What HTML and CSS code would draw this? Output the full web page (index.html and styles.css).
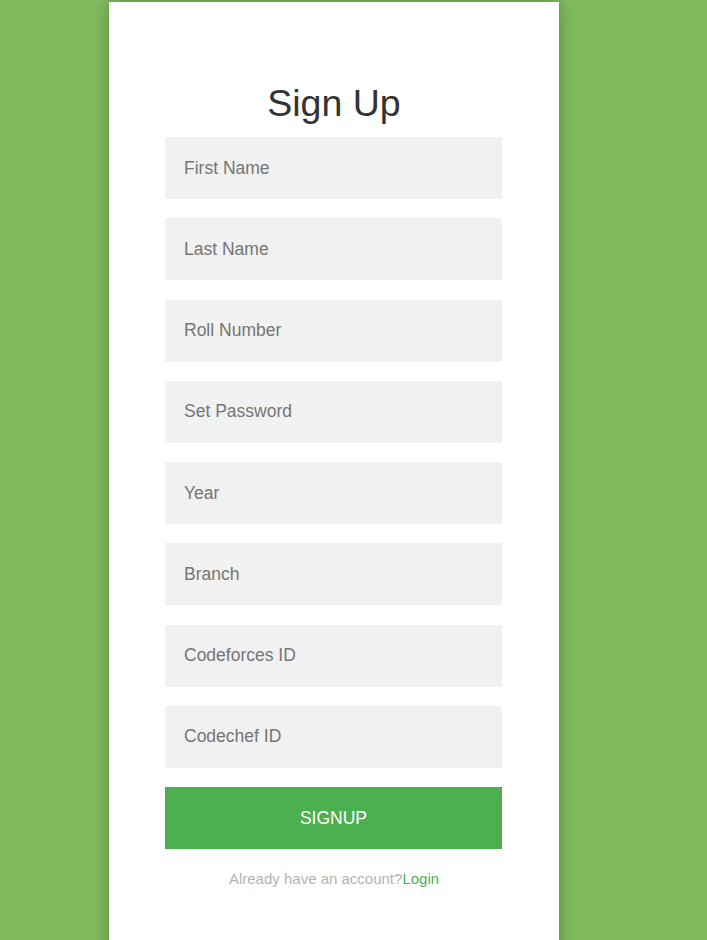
FILE: index.html
```html
<!DOCTYPE html>
<html>
<head>
<meta charset="utf-8">
<link rel="stylesheet" href="styles.css">
</head>
<body>
<div class="card">
  <h1 class="title">Sign Up</h1>
  <form class="form">
    <input class="field" type="text" placeholder="First Name">
    <input class="field" type="text" placeholder="Last Name">
    <input class="field" type="text" placeholder="Roll Number">
    <input class="field" type="password" placeholder="Set Password">
    <input class="field" type="text" placeholder="Year">
    <input class="field" type="text" placeholder="Branch">
    <input class="field" type="text" placeholder="Codeforces ID">
    <input class="field" type="text" placeholder="Codechef ID">
    <button class="btn" type="button">SIGNUP</button>
  </form>
  <p class="footer">Already have an account?<a class="link" href="#">Login</a></p>
</div>
</body>
</html>
```
FILE: styles.css
```css
html, body {
  margin: 0;
  padding: 0;
  height: 100%;
}
body {
  background: #80bc5e;
  font-family: "Liberation Sans", Arial, sans-serif;
  overflow: hidden;
}
.card {
  width: 450px;
  margin: 2px 0 0 109px;
  background: #fff;
  min-height: 960px;
  box-shadow: 0 0 16px rgba(0, 0, 0, 0.3);
  padding-top: 81px;
  box-sizing: border-box;
}
.title {
  margin: 0 0 13px;
  font-size: 37.5px;
  font-weight: normal;
  line-height: 41px;
  color: #333;
  text-align: center;
}
.form {
  display: flex;
  flex-direction: column;
  align-items: flex-start;
  padding-left: 56px;
}
.field {
  width: 337px;
  height: 62px;
  margin: 0 0 19.25px;
  box-sizing: border-box;
  border: none;
  outline: none;
  background: #f1f1f1;
  padding: 0 19px;
  font-family: "Liberation Sans", Arial, sans-serif;
  font-size: 17.5px;
  color: #333;
}
.field::placeholder {
  color: #757575;
  opacity: 1;
}
.btn {
  width: 337px;
  height: 62px;
  border: none;
  background: #4caf50;
  color: #fff;
  font-family: "Liberation Sans", Arial, sans-serif;
  font-size: 17.5px;
  margin: 0;
  padding: 0;
}
.footer {
  margin: 21px 0 0;
  text-align: center;
  font-size: 15px;
  color: #b3b3b3;
}
.link {
  color: #4caf50;
  text-decoration: none;
}
```
